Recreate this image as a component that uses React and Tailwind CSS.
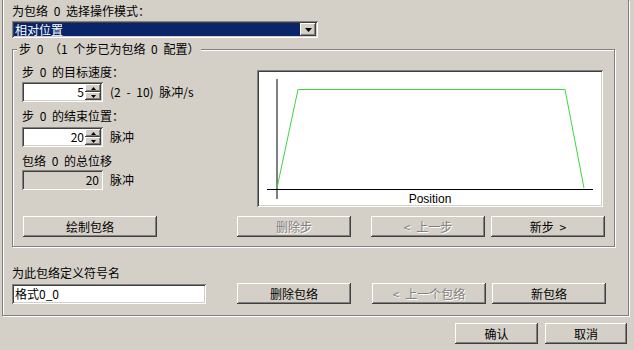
import React from 'react';

const sunken = 'shadow-[inset_1px_1px_0_#808080,inset_-1px_-1px_0_#fff,inset_2px_2px_0_#404040,inset_-2px_-2px_0_#d4d0c8]';
const raised = 'shadow-[inset_-1px_-1px_0_#404040,inset_1px_1px_0_#fff,inset_-2px_-2px_0_#808080]';
const etched = 'border border-[#808080] shadow-[inset_1px_1px_0_#fff,1px_1px_0_#fff]';

const Button = ({ label, width = 'w-[114px]', disabled = false, className = '' }) => (
  <div
    className={`${width} h-[21px] shrink-0 bg-[#d4d0c8] ${raised} flex items-center justify-center leading-[14px] ${
      disabled ? 'text-[#808080] [text-shadow:1px_1px_0_#fff]' : 'text-black'
    } ${className}`}
  >
    {label}
  </div>
);

const Arrow = ({ up }) => (
  <svg width="5" height="3" viewBox="0 0 5 3">
    <path d={up ? 'M2.5 0 L5 3 L0 3 Z' : 'M0 0 L5 0 L2.5 3 Z'} fill="#000" />
  </svg>
);

const SpinInput = ({ value, className = '' }) => (
  <div className={`w-[81px] h-[20px] bg-white ${sunken} flex items-stretch p-[2px] ${className}`}>
    <div className="flex-1 text-right pr-[1px] leading-[16px]">{value}</div>
    <div className="w-[16px] flex flex-col">
      <div className={`flex-1 bg-[#d4d0c8] ${raised} flex items-center justify-center`}>
        <Arrow up />
      </div>
      <div className={`flex-1 bg-[#d4d0c8] ${raised} flex items-center justify-center`}>
        <Arrow />
      </div>
    </div>
  </div>
);

const Chart = () => (
  <div className={`w-[346px] h-[137px] bg-white ${sunken} mt-[20px] shrink-0`}>
    <svg width="346" height="137" viewBox="0 0 346 137">
      <line x1="20" y1="9" x2="20" y2="129" stroke="#000" strokeWidth="1" />
      <line x1="10" y1="119.5" x2="336" y2="119.5" stroke="#000" strokeWidth="1" />
      <polyline
        points="20,118 41,19.5 308,19.5 327,118"
        fill="none"
        stroke="#3ed63e"
        strokeWidth="1"
      />
      <text
        x="173"
        y="133"
        textAnchor="middle"
        fontFamily="'Liberation Sans', Arial, sans-serif"
        fontSize="12"
        fill="#000"
      >
        Position
      </text>
    </svg>
  </div>
);

export default function App() {
  return (
    <div className="w-[634px] h-[350px] bg-[#d4d0c8] overflow-hidden text-[12px] text-black [word-spacing:3px] font-['Noto_Sans_CJK_SC',sans-serif]">
      {/* outer frame, top edge lies above the window */}
      <div className="ml-[2px] w-[627px] h-[316px] border-l border-r border-b border-[#808080] shadow-[inset_1px_0_0_#fff,1px_1px_0_#fff] pl-[9px]">
        <div className="pt-[4px] leading-[14px]">为包络 0 选择操作模式：</div>

        {/* combo box */}
        <div className={`mt-[3px] w-[306px] h-[17px] bg-white ${sunken} p-[2px] flex`}>
          <div className="flex-1 bg-[#0a246a] text-white leading-[13px] pl-[1px]">相对位置</div>
          <div className={`w-[16px] bg-[#d4d0c8] ${raised} flex items-center justify-center`}>
            <svg width="7" height="4" viewBox="0 0 7 4">
              <path d="M0 0 L7 0 L3.5 4 Z" fill="#000" />
            </svg>
          </div>
        </div>

        {/* step group */}
        <div className={`relative mt-[11px] w-[603px] h-[198px] ${etched} pl-[9px]`}>
          <span className="absolute -top-[8px] left-[4px] bg-[#d4d0c8] px-[2px] leading-[14px]">
            步 0 （1 个步已为包络 0 配置）
          </span>

          <div className="flex">
            <div className="w-[235px] shrink-0 pt-[15px]">
              <div className="leading-[14px]">步 0 的目标速度：</div>
              <div className="flex items-center mt-[3px]">
                <SpinInput value="5" />
                <span className="ml-[7px] leading-[14px]">(2 - 10) 脉冲/s</span>
              </div>

              <div className="mt-[7px] leading-[14px]">步 0 的结束位置：</div>
              <div className="flex items-center mt-[4px]">
                <SpinInput value="20" />
                <span className="ml-[7px] leading-[14px]">脉冲</span>
              </div>

              <div className="mt-[7px] leading-[14px]">包络 0 的总位移</div>
              <div className="flex items-center mt-[2px]">
                <div className={`w-[81px] h-[20px] bg-[#d4d0c8] ${sunken} text-right pr-[4px] leading-[20px]`}>20</div>
                <span className="ml-[7px] leading-[14px]">脉冲</span>
              </div>
            </div>
            <Chart />
          </div>

          <div className="flex mt-[9px] pl-[1px]">
            <Button label="绘制包络" width="w-[134px]" />
            <Button label="删除步" disabled className="ml-[80px]" />
            <Button label="< 上一步" disabled className="ml-[20px]" />
            <Button label="新步 >" className="ml-[6px]" />
          </div>
        </div>

        <div className="mt-[19px] leading-[14px]">为此包络定义符号名</div>
        <div className="flex items-start mt-[3px]">
          <div className={`mt-[1px] w-[194px] h-[20px] bg-white ${sunken} pl-[3px] leading-[20px]`}>格式0_0</div>
          <Button label="删除包络" className="ml-[31px]" />
          <Button label="< 上一个包络" disabled className="ml-[21px]" />
          <Button label="新包络" className="ml-[6px]" />
        </div>
      </div>

      <div className="flex justify-end pr-[7px] mt-[7px]">
        <Button label="确认" width="w-[83px]" />
        <Button label="取消" width="w-[82px]" className="ml-[7px]" />
      </div>
    </div>
  );
}
